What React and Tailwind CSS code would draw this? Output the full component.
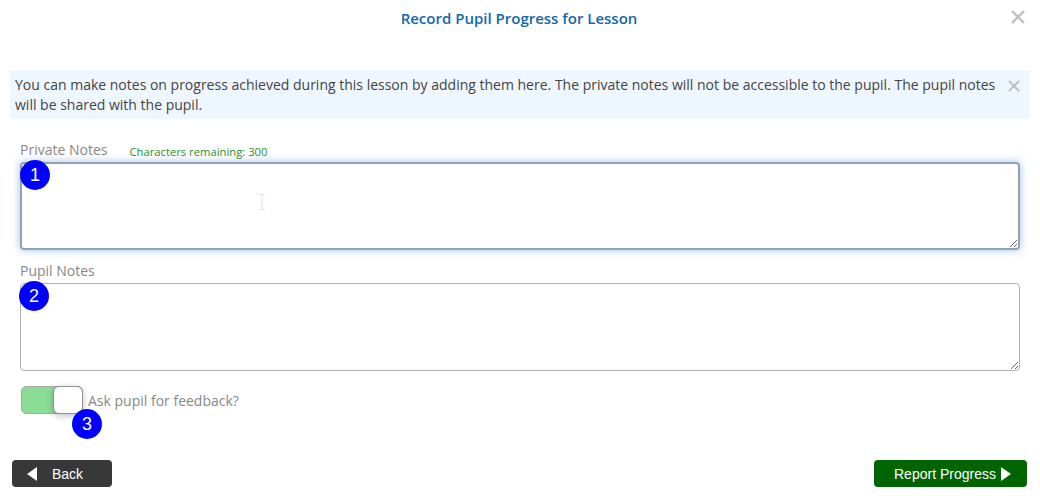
import React from "react";

const sans = "[font-family:'Open_Sans',sans-serif]";
const arial = "[font-family:'Liberation_Sans',Arial,sans-serif]";

function Close({ size, className }) {
  return (
    <svg width={size} height={size} viewBox="0 0 14 14" className={className} fill="none" stroke="#c0c0c0" strokeWidth="2.400">
      <path d="M1 1 13 13M13 1 1 13" />
    </svg>
  );
}

function Badge({ n, className }) {
  return (
    <div className={`absolute w-[30px] h-[30px] rounded-full bg-[#0000ff] text-white flex items-center justify-center text-[18px] ${arial} ${className}`}>
      {n}
    </div>
  );
}

export default function App() {
  return (
    <div className={`w-[1040px] h-[499px] bg-white flex flex-col ${sans} overflow-hidden`}>
      <header className="h-[70px] relative flex justify-center pt-[8px] pr-[2px] shrink-0">
        <h1 className="text-[15px] leading-[21px] font-semibold text-[#0f68ae]">Record Pupil Progress for Lesson</h1>
        <Close size={14} className="absolute right-[15px] top-[10px]" />
      </header>

      <div className="mx-[10px] h-[49px] bg-[#eef7ff] pl-[5px] pr-[10px] pt-[5px] flex justify-between shrink-0">
        <p className="w-[990px] text-[14px] leading-[20px] text-[#444]">
          You can make notes on progress achieved during this lesson by adding them here. The private notes will not be accessible to the pupil. The pupil notes will be shared with the pupil.
        </p>
        <Close size={12} className="mt-[5px]" />
      </div>

      <div className="mx-[20px] mt-[21px] h-[20px] flex items-start shrink-0">
        <span className="text-[14px] leading-[20px] text-[#888]">Private Notes</span>
        <span className="ml-[22px] mt-[3px] text-[11.250px] leading-[18px] text-[#2a8f2a]">Characters remaining: 300</span>
      </div>
      <div className="relative mx-[20px] mt-[2px] h-[88px] shrink-0">
        <textarea className="block w-full h-full bg-white rounded-[4px] border-2 border-[#8fa3bd] shadow-[0_0_8px_rgba(80,140,210,0.55)] outline-none resize-y" />
        <Badge n="1" className="left-0 -top-[2px]" />
        <svg className="absolute left-[238px] top-[32px] pointer-events-none" width="8" height="16" viewBox="0 0 8 16" fill="none" stroke="#e2e2e2">
          <path d="M1 .5h6M1 15.500h6M4 .5v15" />
        </svg>
      </div>

      <div className="mx-[20px] mt-[8px] h-[20px] shrink-0">
        <span className="text-[14px] leading-[20px] text-[#888]">Pupil Notes</span>
      </div>
      <div className="relative mx-[20px] mt-[5px] h-[88px] shrink-0">
        <textarea className="block w-full h-full bg-white rounded-[4px] border border-[#b3b3b3] outline-none resize-y" />
        <Badge n="2" className="-left-[1px] -top-[2px]" />
      </div>

      <div className="mx-[21px] mt-[15px] h-[28px] flex items-start shrink-0">
        <div className="relative w-[62px] h-[28px] rounded-[5px] bg-[#8bdd96] border border-[#a8a8a8]">
          <div className="absolute right-[-1px] top-[-1px] w-[30px] h-[28px] bg-white rounded-[6px] border border-[#8f8f8f] shadow-[0_2px_6px_rgba(0,0,0,0.25)]" />
          <Badge n="3" className="left-[50px] top-[22px]" />
        </div>
        <span className="ml-[5px] mt-[5px] text-[14px] leading-[20px] text-[#888]">Ask pupil for feedback?</span>
      </div>

      <div className={`mx-[12px] mt-[46px] pr-[1px] flex justify-between shrink-0 ${arial}`}>
        <button className="w-[100px] h-[27px] rounded-[4px] bg-[#383838] text-white text-[14px] flex items-center pl-[15px]">
          <svg width="10" height="14" viewBox="0 0 10 14" fill="#fff"><path d="M10 0v14L0 7z" /></svg>
          <span className="ml-[15px] mt-[2px]">Back</span>
        </button>
        <button className="w-[153px] h-[27px] rounded-[4px] bg-[#006400] text-white text-[14px] flex items-center pl-[20px]">
          <span className="mt-[2px]">Report Progress</span>
          <svg className="ml-[5px]" width="10" height="14" viewBox="0 0 10 14" fill="#fff"><path d="M0 0v14l10-7z" /></svg>
        </button>
      </div>
    </div>
  );
}
